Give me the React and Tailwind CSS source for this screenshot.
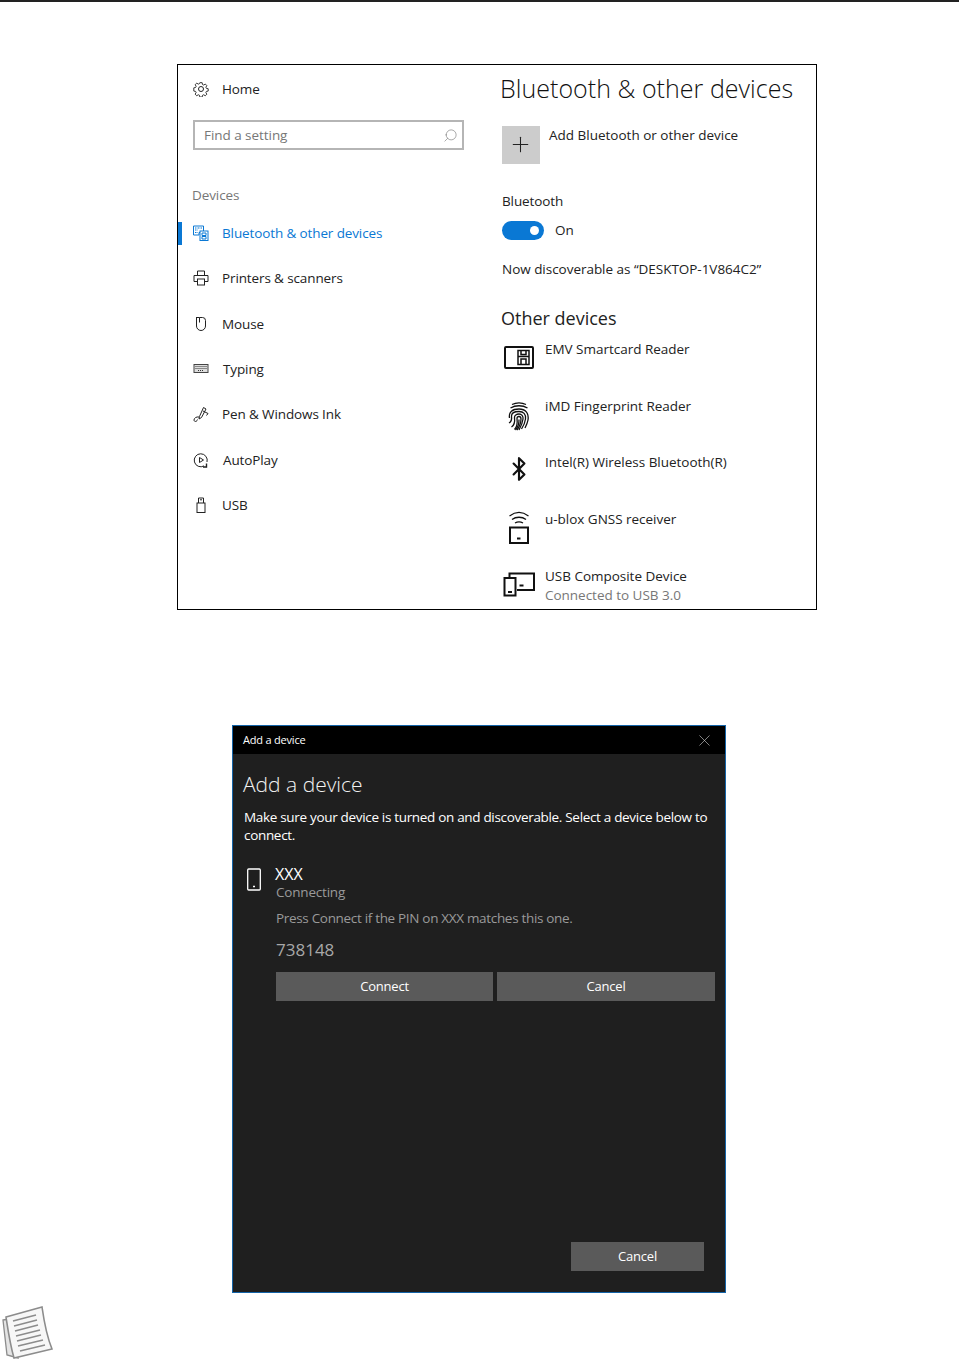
import { Search, Plus, X, Bluetooth } from 'lucide-react';

const font = "font-['Open_Sans','Noto_Sans',sans-serif]";

const Svg = ({ children, className = 'w-4 h-4 shrink-0', box = '0 0 16 16', sw = 1 }) => (
  <svg viewBox={box} className={className} fill="none" stroke="currentColor" strokeWidth={sw}>
    {children}
  </svg>
);

const Gear = () => (
  <Svg className="w-[16px] h-[16px] shrink-0" box="0 0 16 16" sw={1}>
    <circle cx="8" cy="8" r="2.500" />
    <path d="M6.700 1h2.600l.4 2 1.300.6 1.800-1.100 1.700 1.800-1.100 1.700.6 1.300 2 .4v2.600l-2 .4-.6 1.300 1.100 1.800-1.800 1.700-1.700-1.100-1.300.6-.4 2H6.700l-.4-2-1.300-.6-1.800 1.100-1.700-1.800 1.100-1.700-.6-1.300-2-.4V6.700l2-.4.6-1.300-1.100-1.800 1.800-1.700 1.700 1.100 1.300-.6z" transform="translate(0.800 0.800) scale(0.900)" />
  </Svg>
);

const BluetoothDevices = () => (
  <Svg>
    <path d="M0.500 1h10v6.500H6v2.500H0.500z" />
    <path d="M2 3h7M2 5h2.500M2 7.500h2.500" strokeDasharray="1 0.500" />
    <rect x="7" y="6" width="8" height="9.500" fill="white" />
    <path d="M9 8h4v2.500H9zM9 11.500h4V14H9z" />
  </Svg>
);

const PrinterIcon = () => (
  <Svg>
    <path d="M4.500 5V1h7v4" />
    <path d="M4 11.500H1V5.500h14v6h-3" />
    <rect x="4.500" y="9" width="7" height="6" />
  </Svg>
);

const MouseIcon = () => (
  <Svg>
    <path d="M3 1.500h3.500v5M6.500 1.500h3a3 3 0 0 1 3 3V10a4.500 4.500 0 0 1-9 0V1.500" />
  </Svg>
);

const Keyboard = () => (
  <Svg>
    <rect x="1" y="3.500" width="14" height="8" fill="#ddd" stroke="#444" />
    <path d="M2.500 5.500h11M2.500 7.500h11M5 9.500h6" stroke="#333" strokeDasharray="1 1" />
  </Svg>
);

const Pen = () => (
  <Svg>
    <path d="M6.500 10.500L10.500 1.500l2.500 1.500-4.500 8.500-2.500 1.500z" />
    <path d="M10 5l5 2.500-1.500 2M6 11C3.500 10.500 1 12 1 14s3 2 3.500-.5" />
  </Svg>
);

const AutoPlay = () => (
  <Svg>
    <path d="M11 13.900A6.500 6.500 0 1 1 14 10" />
    <path d="M6.500 5.500l4 2.500-4 2.500z" />
    <path d="M13.500 11.500v3.500h-3.500" strokeWidth="1.400" />
  </Svg>
);

const Usb = () => (
  <Svg>
    <rect x="4" y="6" width="8" height="9.500" />
    <path d="M5.500 6V1h5v5M7 2.800h2" />
  </Svg>
);

const Smartcard = () => (
  <Svg className="w-[32px] h-[32px] shrink-0 -mt-[2px]" box="0 0 32 32" sw={2}>
    <rect x="2" y="5" width="28" height="21" rx="1" />
    <path d="M15 8.500h11v14H15zM18 8.500v4h5v-4M18 22.500V17h5v5.500M15 14.500h11" strokeWidth="1.500" />
  </Svg>
);

const Fingerprint = () => (
  <Svg className="w-[32px] h-[32px] shrink-0" box="0 0 32 32" sw={1.300}>
    <path d="M9 3.500c4-2 10-2 14 0M7.500 7c5-3 12-3 17 0" />
    <path d="M6.500 17c-1-6 3-9 9.500-9s10 4 9 11c-.5 3-1.500 5-3 8" />
    <path d="M6 22c2-1 3-3 2.500-7 0-3 3-4.500 7.500-4.500s7 2.500 6.500 7.500c-.5 4-2 7-4 10" />
    <path d="M8.500 26c3-2 3.500-5.500 3-9.500 0-2 2-3.500 4.500-3.500s4.500 2 4 5c-.5 4-2 7.500-4 11" />
    <path d="M11.500 28.500c3-3 3-7 2.500-11 0-1 1-2 2-2s2 1 2 2.500c0 4-1.500 7.500-4 11" />
    <path d="M16 18.500c.2 4-1 7.500-3.500 10.500" />
  </Svg>
);

const Gnss = () => (
  <Svg className="w-[32px] h-[36px] shrink-0 -mt-[5px]" box="0 0 32 36" sw={1.300}>
    <path d="M6.500 7c6-4.500 13-4.500 19 0M9 10.500c4-3 10-3 14 0M12 14c2.500-1.500 5.500-1.500 8 0" />
    <rect x="7" y="18.500" width="18" height="15.500" strokeWidth="2" />
    <path d="M14 29.500h3.500" strokeWidth="2" />
  </Svg>
);

const Composite = () => (
  <Svg className="w-[32px] h-[28px] shrink-0 -mt-[1px]" box="0 0 32 28" sw={2}>
    <path d="M6.500 8V3.500h24.500v16.500H14" />
    <rect x="1.500" y="8" width="11" height="17.500" fill="white" />
    <path d="M5 22h4M16.500 15.500h4" />
  </Svg>
);

const PhoneIcon = () => (
  <Svg className="w-[14px] h-[24px] shrink-0" box="0 0 14 24" sw={1.300}>
    <rect x="0.700" y="1" width="12.600" height="21" rx="1" />
    <path d="M6 18.500h2" />
  </Svg>
);

const NavItem = ({ icon, label, active, labelClass = 'ml-[13px]' }) => (
  <div className={`relative flex items-center h-[45.300px] pl-[15px] ${active ? 'text-[#0a78d4]' : 'text-[#222]'}`}>
    {active && <div className="absolute left-0 top-[11px] w-[4px] h-[23px] bg-[#0a78d4]" />}
    <span className="w-[16px] h-[16px] flex items-center justify-center">{icon}</span>
    <span className={`text-[13.500px] tracking-[-0.120px] ${labelClass}`}>{label}</span>
  </div>
);

const DeviceRow = ({ icon, name, sub, className = 'h-[56.700px]' }) => (
  <div className={`flex ${className}`}>
    <span className="w-[38px] flex justify-center pt-[3px] text-[#111]">{icon}</span>
    <div className="ml-[7px] text-[13.500px] tracking-[-0.020px] leading-[19px] text-[#222]">
      <div className="-mt-[1px]">{name}</div>
      {sub && <div className="text-[#777]">{sub}</div>}
    </div>
  </div>
);

const SettingsPanel = () => (
  <div className="w-[640px] h-[546px] ml-[177px] bg-white border border-black flex overflow-hidden">
    <div className="w-[300px] shrink-0">
      <div className="h-[50px] pt-[15px] pl-[15px] flex items-start text-[#222]">
        <span className="mt-[1px]"><Gear /></span>
        <span className="ml-[13px] text-[13.500px] leading-[19px] tracking-[-0.100px]">Home</span>
      </div>
      <div className="ml-[15px] mt-[5px] w-[271px] h-[30px] border-2 border-[#b5b5b5] flex items-center justify-between pl-[9px] pr-[4px] text-[#777]">
        <span className="text-[13.500px] tracking-[-0.050px]">Find a setting</span>
        <Search className="w-[15px] h-[15px] shrink-0 -scale-x-100" strokeWidth={1} />
      </div>
      <div className="mt-[36px] pl-[14px] text-[13.500px] leading-[19px] tracking-[-0.100px] text-[#777]">Devices</div>
      <div className="mt-[5.500px]">
        <NavItem active icon={<BluetoothDevices />} label="Bluetooth & other devices" />
        <NavItem icon={<PrinterIcon />} label="Printers & scanners" />
        <NavItem icon={<MouseIcon />} label="Mouse" />
        <NavItem icon={<Keyboard />} label="Typing" labelClass="ml-[14px]" />
        <NavItem icon={<Pen />} label="Pen & Windows Ink" />
        <NavItem icon={<AutoPlay />} label="AutoPlay" labelClass="ml-[14px]" />
        <NavItem icon={<Usb />} label="USB" />
      </div>
    </div>
    <div className="flex-1 pl-[22px]">
      <h1 className="mt-[5px] text-[25px] leading-[36px] font-light tracking-[0.040px] text-[#111] whitespace-nowrap">Bluetooth &amp; other devices</h1>
      <div className="flex mt-[20px]">
        <div className="w-[38px] h-[38px] ml-[2px] bg-[#cccccc] flex items-center justify-center text-[#222]">
          <Plus className="w-[25px] h-[25px] shrink-0 -mt-[2px] -ml-[1px]" strokeWidth={1} />
        </div>
        <span className="ml-[9px] text-[13.500px] leading-[19px] tracking-[0px] text-[#222]">Add Bluetooth or other device</span>
      </div>
      <div className="ml-[2px] mt-[28px] text-[13.500px] leading-[19px] tracking-[-0.100px] text-[#222]">Bluetooth</div>
      <div className="ml-[2px] mt-[9px] flex items-center h-[20px]">
        <div className="w-[42px] h-[19px] rounded-full bg-[#0a78d4] flex items-center justify-end pr-[5px]">
          <div className="w-[9px] h-[9px] rounded-full bg-white" />
        </div>
        <span className="ml-[11px] text-[13.500px] tracking-[-0.100px] text-[#222]">On</span>
      </div>
      <div className="ml-[2px] mt-[20px] text-[13.500px] leading-[19px] tracking-[-0.030px] text-[#222] whitespace-nowrap">Now discoverable as “DESKTOP-1V864C2”</div>
      <div className="ml-[1px] mt-[26px] text-[18px] leading-[26px] text-[#222]">Other devices</div>
      <div className="mt-[10px]">
        <DeviceRow icon={<Smartcard />} name="EMV Smartcard Reader" />
        <DeviceRow icon={<Fingerprint />} name="iMD Fingerprint Reader" />
        <DeviceRow icon={<Bluetooth className="w-[26px] h-[26px] shrink-0 -mt-[1px]" strokeWidth={2} />} name="Intel(R) Wireless Bluetooth(R)" />
        <DeviceRow icon={<Gnss />} name="u-blox GNSS receiver" />
        <DeviceRow icon={<Composite />} name="USB Composite Device" sub="Connected to USB 3.0" className="h-[40px]" />
      </div>
    </div>
  </div>
);

const DarkButton = ({ children, className = '' }) => (
  <div className={`h-[29px] bg-[#5a5a5a] flex items-center justify-center text-[13px] text-white tracking-[-0.200px] ${className}`}>
    {children}
  </div>
);

const AddDevice = () => (
  <div className="w-[494px] h-[568px] ml-[232px] bg-[#1f1f1f] border border-[#1464a8] flex flex-col text-white">
    <div className="h-[28px] shrink-0 bg-black flex items-center justify-between pl-[10px] pr-[11px]">
      <span className="text-[11px] tracking-[-0.200px]">Add a device</span>
      <X className="w-[19px] h-[19px] shrink-0 text-[#ccc]" strokeWidth={0.800} />
    </div>
    <div className="flex-1 flex flex-col pl-[11px] pr-[10px]">
      <h2 className="-ml-[1px] mt-[14px] text-[21px] leading-[32px] font-light text-[#f2f2f2]">Add a device</h2>
      <p className="mt-[8px] text-[13.500px] leading-[18px] tracking-[-0.320px]">
        Make sure your device is turned on and discoverable. Select a device below to connect.
      </p>
      <div className="mt-[21px] flex">
        <span className="w-[32px] pl-[3px] pt-[3px] shrink-0"><PhoneIcon /></span>
        <div className="flex-1">
          <div className="-ml-[1px] text-[16px] leading-[18px]">XXX</div>
          <div className="text-[13.500px] leading-[18px] tracking-[-0.200px] text-[#9a9a9a]">Connecting</div>
          <div className="mt-[8px] text-[13.500px] leading-[18px] tracking-[-0.320px] text-[#9a9a9a]">Press Connect if the PIN on XXX matches this one.</div>
          <div className="mt-[11px] text-[17px] leading-[24px] text-[#a8a8a8]">738148</div>
          <div className="mt-[10px] flex gap-[4px]">
            <DarkButton className="w-[217px]">Connect</DarkButton>
            <DarkButton className="w-[218px]">Cancel</DarkButton>
          </div>
        </div>
      </div>
      <div className="mt-auto mb-[21px] flex justify-end pr-[11px]">
        <DarkButton className="w-[133px] pt-[1px]">Cancel</DarkButton>
      </div>
    </div>
  </div>
);

const NoteIcon = () => (
  <svg viewBox="0 0 54 56" className="w-[54px] h-[56px]" fill="none" stroke="#8c8c8c">
    <path d="M3 16l6-1 9 39 -11-3z" fill="#e4e4e4" strokeWidth="1.300" />
    <path d="M6 13L42 3c2 14 5 30 10 42L14 54C10 40 8 26 6 13z" fill="#f7f7f7" strokeWidth="1.600" />
    <path d="M13 17l23-6M14 22l23-6M15 27l23-6M16 32l24-6M17 37l24-6M18 42l25-6M20 47l25-6" strokeWidth="1.500" />
  </svg>
);

export default function App() {
  return (
    <div className={`relative w-[959px] h-[1360px] overflow-hidden bg-white ${font}`}>
      <div className="h-[2px] bg-[#222]" />
      <div className="pt-[62px]">
        <SettingsPanel />
      </div>
      <div className="pt-[115px]">
        <AddDevice />
      </div>
      <div className="absolute left-0 bottom-0">
        <NoteIcon />
      </div>
    </div>
  );
}
